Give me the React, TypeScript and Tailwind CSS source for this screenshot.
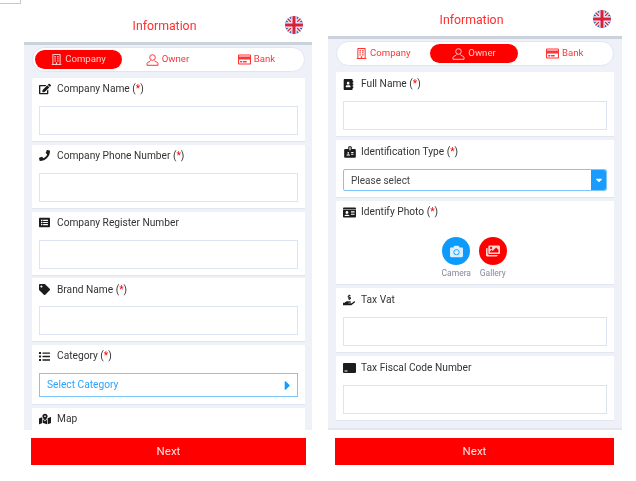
import React from "react";
import {
  FaEdit,
  FaListAlt,
  FaTag,
  FaList,
  FaMapMarkedAlt,
  FaAddressBook,
  FaIdCard,
  FaHandHoldingUsd,
  FaCamera,
  FaImages,
  FaPhone,
  FaCaretRight,
  FaCaretDown,
  FaRegBuilding,
  FaRegCreditCard,
} from "react-icons/fa";
import { MdBadge } from "react-icons/md";

function Flag() {
  return (
    <svg width="18" height="18" viewBox="0 0 20 20" className="shrink-0">
      <defs>
        <clipPath id="flagCircle">
          <circle cx="10" cy="10" r="10" />
        </clipPath>
      </defs>
      <g clipPath="url(#flagCircle)">
        <rect width="20" height="20" fill="#3a62b8" />
        <path d="M0 0L20 20M20 0L0 20" stroke="#f4f4f8" strokeWidth="4" />
        <path d="M0 0L20 20M20 0L0 20" stroke="#d8203c" strokeWidth="1.4" />
        <path d="M10 0V20M0 10H20" stroke="#f4f4f8" strokeWidth="6" />
        <path d="M10 0V20M0 10H20" stroke="#d8203c" strokeWidth="3.4" />
      </g>
    </svg>
  );
}

function UserIcon() {
  return (
    <svg width="13" height="12" viewBox="0 0 13 12" fill="none" stroke="currentColor" strokeWidth="1">
      <circle cx="6.5" cy="3.5" r="2.8" />
      <path d="M4.5 6.5C4.5 8 1 7.8 1 9.5V11.3H12V9.5C12 7.8 8.5 8 8.5 6.5" />
    </svg>
  );
}

function FiscalIcon() {
  return (
    <svg width="13" height="10" viewBox="0 0 13 10">
      <rect width="13" height="10" rx="1" fill="#1c1c1c" />
      <rect x="1.5" y="7.5" width="3" height="1" fill="#ffffff" />
    </svg>
  );
}

function Tabs({ active }: { active: string }) {
  const tabs = [
    { name: "Company", icon: <FaRegBuilding size={11} /> },
    { name: "Owner", icon: <UserIcon /> },
    { name: "Bank", icon: <FaRegCreditCard size={13} /> },
  ];
  return (
    <div className="mx-2 flex h-[25px] shrink-0 items-center rounded-full border border-[#dfe5f1] bg-white pl-[1px] pr-[3px]">
      {tabs.map((t) => (
        <div
          key={t.name}
          className={
            t.name === active
              ? "mx-px flex h-[19px] flex-1 items-center justify-center gap-[3px] rounded-full bg-[#ff0000] text-[9.6px] text-[#ffc9c9]"
              : "mx-px flex h-[19px] flex-1 items-center justify-center gap-[3px] text-[9.6px] text-[#ff3434]"
          }
        >
          {t.icon}
          <span>{t.name}</span>
        </div>
      ))}
    </div>
  );
}

function Label({
  icon,
  text,
  required,
}: {
  icon: React.ReactNode;
  text: string;
  required?: boolean;
}) {
  return (
    <div className="flex h-[12px] items-center text-[10.2px] text-[#333]">
      <span className="flex w-[18px] shrink-0 items-center text-[#1c1c1c]">{icon}</span>
      <span>
        {text}
        {required && (
          <>
            {" ("}
            <span className="text-[#ff0000]">*</span>
            {")"}
          </>
        )}
      </span>
    </div>
  );
}

function TextCard({
  icon,
  text,
  required,
  top = "pt-[5px]",
}: {
  icon: React.ReactNode;
  text: string;
  required?: boolean;
  top?: string;
}) {
  return (
    <div className={`mx-2 border-b border-[#dfe5f1] bg-white px-[7px] pb-[6px] ${top}`}>
      <Label icon={icon} text={text} required={required} />
      <div className="mt-[11px] h-[29px] border border-[#dce4f2] bg-white" />
    </div>
  );
}

function Header({ flagRight }: { flagRight: string }) {
  return (
    <div className="relative flex h-[32px] items-center justify-center bg-white">
      <span className="pr-[7px] text-[12.3px] text-[#ff2d2d]">Information</span>
      <span className={`absolute top-[6px] ${flagRight}`}>
        <Flag />
      </span>
    </div>
  );
}

function NextButton({ className }: { className: string }) {
  return (
    <div
      className={`mt-[8px] flex h-[27px] items-center justify-center bg-[#ff0000] text-[11.5px] text-[#ffe2e2] ${className}`}
    >
      Next
    </div>
  );
}

function CompanyPhone() {
  return (
    <div className="ml-[24px] flex w-[288px] flex-col pt-[10px]">
      <Header flagRight="right-[9px]" />
      <div className="h-[388px] overflow-hidden border-t-[3px] border-[#ccd2dc] bg-[#eef1f7] pt-[2px]">
        <div className="-mr-px flex flex-col">
          <Tabs active="Company" />
          <div className="mt-[6px] flex shrink-0 flex-col gap-[2.75px]">
            <TextCard icon={<FaEdit size={12} />} text="Company Name" required />
            <TextCard icon={<FaPhone size={11} />} text="Company Phone Number" required />
            <TextCard icon={<FaListAlt size={11} />} text="Company Register Number" />
            <TextCard icon={<FaTag size={11} />} text="Brand Name" required />
            <div className="mx-2 border-b border-[#dfe5f1] bg-white px-[7px] pb-[7px] pt-[5px]">
              <Label icon={<FaList size={11} />} text="Category" required />
              <div className="mt-[11px] flex h-[24px] items-center justify-between border-[1.5px] border-[#7cc6fb] bg-white pl-[7px] pr-[2px] text-[10.2px] text-[#2ba3ff]">
                <span>Select Category</span>
                <FaCaretRight size={15} className="text-[#1a9bff]" />
              </div>
            </div>
            <div className="mx-2 h-[30px] bg-white px-[7px] pt-[5px]">
              <Label icon={<FaMapMarkedAlt size={12} />} text="Map" />
            </div>
          </div>
        </div>
      </div>
      <NextButton className="ml-[7px] mr-[6px]" />
    </div>
  );
}

function OwnerPhone() {
  return (
    <div className="ml-[16px] flex w-[294px] flex-col pt-[4px]">
      <Header flagRight="right-[11px]" />
      <div className="flex h-[394px] flex-col overflow-hidden border-t-[3px] border-b-2 border-t-[#ccd2dc] border-b-[#e3e7ef] bg-[#eef1f7] pt-[2px]">
        <Tabs active="Owner" />
        <div className="mt-[6px] flex shrink-0 flex-col gap-[3px]">
          <TextCard icon={<FaAddressBook size={11} />} text="Full Name" required top="pt-[6px]" />
          <div className="mx-2 border-b border-[#dfe5f1] bg-white px-[7px] pb-[6px] pt-[6px]">
            <Label icon={<MdBadge size={14} />} text="Identification Type" required />
            <div className="mt-[11px] flex h-[22px] items-center justify-between rounded-[2px] border-[1.5px] border-[#7cc6fb] bg-white pl-[7px] text-[10px] text-[#444]">
              <span>Please select</span>
              <span className="flex h-full w-[15px] items-center justify-center rounded-r-[2px] bg-[#1a9bff] text-white">
                <FaCaretDown size={10} />
              </span>
            </div>
          </div>
          <div className="mx-2 h-[84px] border-b border-[#dfe5f1] bg-white px-[7px] pt-[5px]">
            <Label icon={<FaIdCard size={13} />} text="Identify Photo" required />
            <div className="mt-[19px] flex justify-center gap-[8.5px] pr-px">
              <div className="flex w-[28px] flex-col items-center">
                <span className="flex h-[28px] w-[28px] items-center justify-center rounded-full bg-[#0d9bfb] text-[#d9efff]">
                  <FaCamera size={13} />
                </span>
                <span className="mt-[2px] text-[8.5px] text-[#85889a]">Camera</span>
              </div>
              <div className="flex w-[28px] flex-col items-center">
                <span className="flex h-[28px] w-[28px] items-center justify-center rounded-full bg-[#ff0000] text-[#ffd6d6]">
                  <FaImages size={14} />
                </span>
                <span className="mt-[2px] text-[8.5px] text-[#85889a]">Gallery</span>
              </div>
            </div>
          </div>
          <TextCard icon={<FaHandHoldingUsd size={12} />} text="Tax Vat" top="pt-[6px]" />
          <TextCard icon={<FiscalIcon />} text="Tax Fiscal Code Number" top="pt-[6px]" />
        </div>
      </div>
      <NextButton className="ml-[7px] mr-[8px]" />
    </div>
  );
}

export default function App() {
  return (
    <div
      className="relative flex h-[481px] w-[636px] items-start overflow-hidden bg-white blur-[0.5px]"
      style={{ fontFamily: "Roboto, sans-serif" }}
    >
      <div className="absolute left-0 top-0 h-[4px] w-[21px] border-b border-r border-[#c8c8c8]" />
      <CompanyPhone />
      <OwnerPhone />
    </div>
  );
}
